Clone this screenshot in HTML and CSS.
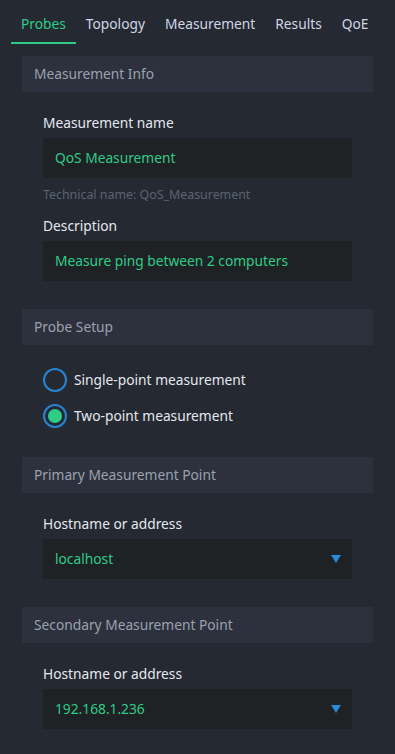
FILE: index.html
```html
<!DOCTYPE html>
<html lang="en">

<head>
  <meta charset="UTF-8">
  <meta name="viewport" content="width=device-width, initial-scale=1.0">
  <title>Measurement Setup</title>
  <link rel="stylesheet" href="styles.css">
</head>

<body>
  <nav class="tabs">
    <a class="tab active">Probes</a>
    <a class="tab">Topology</a>
    <a class="tab">Measurement</a>
    <a class="tab">Results</a>
    <a class="tab">QoE</a>
  </nav>

  <main class="content">
    <section class="panel">
      <h2 class="panel-header">Measurement Info</h2>
      <div class="panel-body">
        <div class="field">
          <label for="name">Measurement name</label>
          <div class="input" id="name">QoS Measurement</div>
          <p class="hint">Technical name: QoS_Measurement</p>
        </div>
        <div class="field">
          <label for="description">Description</label>
          <div class="input" id="description">Measure ping between 2 computers</div>
        </div>
      </div>
    </section>

    <section class="panel">
      <h2 class="panel-header">Probe Setup</h2>
      <div class="panel-body radios">
        <div class="radio">
          <span class="radio-dot"></span>
          <span>Single-point measurement</span>
        </div>
        <div class="radio checked">
          <span class="radio-dot"></span>
          <span>Two-point measurement</span>
        </div>
      </div>
    </section>

    <section class="panel">
      <h2 class="panel-header">Primary Measurement Point</h2>
      <div class="panel-body">
        <div class="field">
          <label>Hostname or address</label>
          <div class="input select">
            <span>localhost</span>
            <span class="arrow"></span>
          </div>
        </div>
      </div>
    </section>

    <section class="panel">
      <h2 class="panel-header">Secondary Measurement Point</h2>
      <div class="panel-body">
        <div class="field">
          <label>Hostname or address</label>
          <div class="input select">
            <span>192.168.1.236</span>
            <span class="arrow"></span>
          </div>
        </div>
      </div>
    </section>
  </main>
</body>

</html>
```

FILE: styles.css
```css
body {
  margin: 0;
  background: #252932;
  color: #dfe3ea;
  font-family: "Noto Sans", sans-serif;
  font-size: 13.75px;
  overflow: hidden;
}

.tabs {
  display: flex;
  padding: 0 11px;
  height: 44px;
}

.tab {
  padding: 5px 10px 0;
  line-height: 37px;
  color: #cfd6e4;
  border-bottom: 2px solid transparent;
}

.tab.active {
  color: #2ecc87;
  border-bottom-color: #2ecc87;
}

.content {
  padding: 12px 22px 0;
}

.panel-header {
  margin: 0;
  height: 36px;
  line-height: 36px;
  padding: 0 12px;
  background: #2c313d;
  color: #9ba2ae;
  font-size: 13.75px;
  font-weight: normal;
}

.panel-body {
  padding: 21px 21px 28px;
}

.field label {
  display: block;
  line-height: 20px;
  margin-bottom: 5px;
  color: #e4e8ee;
}

.field + .field {
  margin-top: 13px;
}

.input {
  height: 40px;
  line-height: 40px;
  padding: 0 12px;
  background: #1e2225;
  color: #2ecc87;
}

.hint {
  margin: 9px 0 0;
  font-size: 12.4px;
  line-height: 16px;
  color: #5b6372;
}

.select {
  display: flex;
  justify-content: space-between;
  align-items: center;
}

.arrow {
  width: 0;
  height: 0;
  border-left: 5px solid transparent;
  border-right: 5px solid transparent;
  border-top: 8px solid #2a8ad8;
  margin-right: -1px;
}

.radios {
  padding-top: 23px;
  padding-bottom: 29px;
  display: flex;
  flex-direction: column;
  gap: 12px;
}

.radio {
  display: flex;
  align-items: center;
  gap: 7px;
  color: #e4e8ee;
  line-height: 24px;
}

.radio-dot {
  width: 20px;
  height: 20px;
  border: 2px solid #2a83d0;
  border-radius: 50%;
  display: flex;
  align-items: center;
  justify-content: center;
}

.radio.checked .radio-dot::after {
  content: "";
  width: 14px;
  height: 14px;
  border-radius: 50%;
  background: #2ecc87;
}
```
